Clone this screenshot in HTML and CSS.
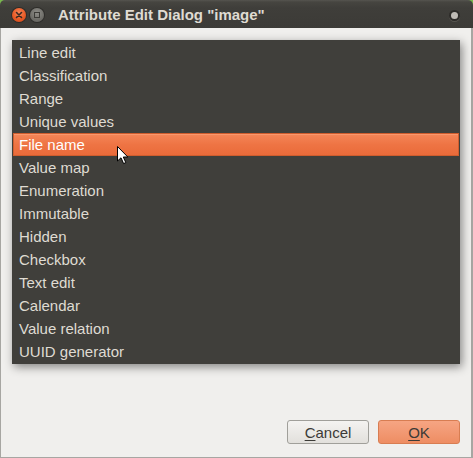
FILE: index.html
```html
<!DOCTYPE html>
<html>
<head>
<meta charset="utf-8">
<link rel="stylesheet" href="styles.css">
</head>
<body>
<div class="window">
  <div class="titlebar">
    <div class="wbtn close"><svg width="8" height="8" viewBox="0 0 8 8"><path d="M1.5 1.5 L6.5 6.5 M6.5 1.5 L1.5 6.5" stroke="#3a2a22" stroke-width="1.6" stroke-linecap="round"/></svg></div>
    <div class="wbtn minimize"><span class="sq"></span></div>
    <div class="title">Attribute Edit Dialog "image"</div>
    <div class="wbtn maximize"><span class="dot"></span></div>
  </div>
  <div class="frame">
    <ul class="list">
      <li>Line edit</li>
      <li>Classification</li>
      <li>Range</li>
      <li>Unique values</li>
      <li class="selected">File name
        <svg class="cursor" width="13" height="19" viewBox="0 0 13 19"><path d="M0.5 0.5 L0.5 15 L4 11.8 L6.6 17.6 L8.8 16.6 L6.3 11 L10.8 11 Z" fill="#fff" stroke="#000" stroke-width="1" stroke-linejoin="round"/></svg>
      </li>
      <li>Value map</li>
      <li>Enumeration</li>
      <li>Immutable</li>
      <li>Hidden</li>
      <li>Checkbox</li>
      <li>Text edit</li>
      <li>Calendar</li>
      <li>Value relation</li>
      <li>UUID generator</li>
    </ul>
    <div class="buttons">
      <button class="btn cancel"><u>C</u>ancel</button>
      <button class="btn ok"><u>O</u>K</button>
    </div>
  </div>
</div>
</body>
</html>
```
FILE: styles.css
```css
html, body {
  margin: 0;
  padding: 0;
}
body {
  width: 473px;
  height: 458px;
  overflow: hidden;
  background: #79b84e;
  font-family: "Liberation Sans", "DejaVu Sans", sans-serif;
}
.window {
  width: 473px;
  height: 458px;
  display: flex;
  flex-direction: column;
}
.titlebar {
  height: 28px;
  flex: none;
  border-radius: 5px 5px 0 0;
  background: linear-gradient(#55544f 0, #464540 2px, #3f3e3a 8px, #3c3b37 100%);
  display: flex;
  align-items: center;
  padding-left: 12px;
  padding-right: 13px;
}
.wbtn {
  width: 14px;
  height: 14px;
  border-radius: 50%;
  display: flex;
  align-items: center;
  justify-content: center;
  flex: none;
  margin-top: 2px;
}
.close {
  background: radial-gradient(circle at 50% 35%, #f7865a 0, #e95a25 55%, #c9461a 100%);
  box-shadow: 0 0 0 1px #2e2d2a;
}
.minimize {
  margin-left: 4px;
  background: radial-gradient(circle at 50% 35%, #8e8d88 0, #6f6e69 60%, #5c5b57 100%);
  box-shadow: 0 0 0 1px #2e2d2a;
}
.minimize .sq {
  width: 6px;
  height: 6px;
  border: 1px solid #3c3b37;
  box-sizing: border-box;
}
.title {
  margin-left: 14px;
  color: #dfdbd2;
  font-weight: bold;
  font-size: 15px;
  flex: 1;
  margin-top: 1px;
}
.maximize {
  width: 11px;
  height: 11px;
  background: #2c2b28;
  box-shadow: 0 1px 0 #55544f;
}
.maximize .dot {
  width: 7px;
  height: 7px;
  border-radius: 50%;
  background: #bdbab4;
}
.frame {
  flex: 1;
  background: #f0efed;
  border: 1px solid #a7a6a2;
  border-top: 0;
  border-right-width: 2px;
  display: flex;
  flex-direction: column;
  padding: 12px 11px 13px 11px;
}
.list {
  margin: 0;
  padding: 1px;
  list-style: none;
  height: 324px;
  box-sizing: border-box;
  background: #403f3b;
  box-shadow: 2px 3px 9px rgba(0, 0, 0, 0.45);
}
.list li {
  height: 23px;
  line-height: 24px;
  padding-left: 6px;
  color: #dfdbd2;
  font-size: 15px;
  position: relative;
}
.list li.selected {
  color: #ffffff;
  background: linear-gradient(#f5885a, #ee7444 50%, #e96a39);
  box-shadow: inset 0 0 0 1px #cf5d2e, inset 0 2px 0 rgba(255, 170, 130, 0.5);
}
.cursor {
  position: absolute;
  left: 104px;
  top: 13px;
}
.buttons {
  margin-top: auto;
  display: flex;
  justify-content: flex-end;
  gap: 9px;
}
.btn {
  width: 82px;
  height: 24px;
  border-radius: 3px;
  font-family: "Liberation Sans", "DejaVu Sans", sans-serif;
  font-size: 15px;
  color: #3c3b37;
  padding: 0;
}
.cancel {
  background: linear-gradient(#f4f3f1, #e2e0dc);
  border: 1px solid #a09f9a;
}
.ok {
  background: linear-gradient(#f6a583, #ee8d63);
  border: 1px solid #d87d52;
}
.btn u {
  text-decoration-thickness: 1px;
  text-underline-offset: 2px;
}
```
